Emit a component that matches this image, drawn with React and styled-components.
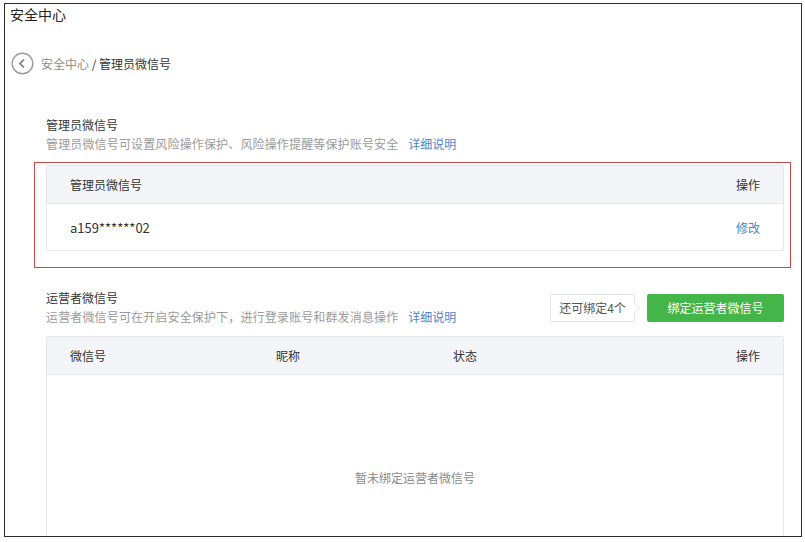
import React from "react";
import styled, { createGlobalStyle } from "styled-components";

const GlobalStyle = createGlobalStyle`
  body {
    margin: 0;
    background: #ffffff;
    font-family: "Noto Sans CJK SC", "Liberation Sans", sans-serif;
    color: #353535;
  }
`;

const Frame = styled.div`
  box-sizing: border-box;
  width: 798px;
  height: 534px;
  margin: 3px 0 0 4px;
  border: 1px solid #2b2b2b;
  overflow: hidden;
`;

const PageTitle = styled.div`
  padding: 0 0 0 5px;
  height: 20px;
  font-size: 14px;
  line-height: 20px;
  color: #222;
`;

const Breadcrumb = styled.div`
  display: flex;
  align-items: center;
  gap: 7px;
  height: 24px;
  margin-top: 27px;
  padding-left: 6px;
  font-size: 12px;
`;

const Crumb = styled.span`
  color: ${(p) => (p.$current ? "#333" : "#8d8d8d")};
`;

const Content = styled.div`
  padding: 0 17px 0 41px;
`;

const SectionHead = styled.div`
  display: flex;
  align-items: center;
  justify-content: space-between;
  margin-top: ${(p) => p.$top}px;
`;

const Heading = styled.div`
  font-size: 12px;
  line-height: 18px;
  color: #353535;
`;

const Desc = styled.div`
  margin-top: 1px;
  font-size: 12px;
  letter-spacing: 0.15px;
  line-height: 18px;
  color: #9a9a9a;
`;

const Link = styled.a`
  margin-left: 10px;
  color: #4d86c8;
  font-size: 12px;
  letter-spacing: 0;
  text-decoration: none;
`;

const Highlight = styled.div`
  margin: 9px -7px 0 -12px;
  padding: 2px 6px 16px 11px;
  border: 1px solid #c9494b;
`;

const Table = styled.div`
  border: 1px solid #e7e7eb;
  border-radius: 2px;
  margin-top: ${(p) => p.$top || 0}px;
`;

const Row = styled.div`
  display: grid;
  grid-template-columns: ${(p) => p.$cols};
  align-items: center;
  height: ${(p) => (p.$head ? 37 : 46)}px;
  padding: 0 23px;
  font-size: 12px;
  color: #333;
  background: ${(p) => (p.$head ? "#f4f5f9" : "#fff")};
  border-bottom: ${(p) => (p.$head ? "1px solid #e7e7eb" : "none")};
`;

const Cell = styled.div`
  text-align: ${(p) => (p.$right ? "right" : "left")};
`;

const Value = styled(Cell)`
  font-size: 13px;
`;

const Action = styled(Cell)`
  color: #4d86c8;
`;

const Empty = styled.div`
  display: flex;
  align-items: center;
  justify-content: center;
  height: 204px;
  font-size: 12px;
  color: #8a8a8a;
`;

const Actions = styled.div`
  display: flex;
  align-items: center;
  gap: 12px;
`;

const Bubble = styled.div`
  position: relative;
  box-sizing: border-box;
  height: 28px;
  padding: 0 8px;
  border: 1px solid #e4e4e4;
  background: #fff;
  font-size: 12px;
  line-height: 26px;
  color: #555;

  &::before,
  &::after {
    content: "";
    position: absolute;
    top: 50%;
    width: 0;
    height: 0;
    border-style: solid;
    transform: translateY(-50%);
  }
  &::before {
    right: -6px;
    border-width: 6px 0 6px 6px;
    border-color: transparent transparent transparent #e4e4e4;
  }
  &::after {
    right: -5px;
    border-width: 5px 0 5px 5px;
    border-color: transparent transparent transparent #fff;
  }
`;

const GreenButton = styled.button`
  height: 28px;
  width: 137px;
  border: none;
  border-radius: 2px;
  background: #44b549;
  color: #fff;
  font-family: inherit;
  font-size: 12px;
`;

const BackIcon = () => (
  <svg width="23" height="23" viewBox="0 0 23 23">
    <circle cx="11.5" cy="11.5" r="10.3" fill="none" stroke="#9c9c9c" strokeWidth="1.4" />
    <path d="M13 7.5 L9 11.5 L13 15.5" fill="none" stroke="#777" strokeWidth="1.6" />
  </svg>
);

export default function App() {
  return (
    <>
      <GlobalStyle />
      <Frame>
        <PageTitle>安全中心</PageTitle>
        <Breadcrumb>
          <BackIcon />
          <span>
            <Crumb>安全中心</Crumb>
            <Crumb $current> / 管理员微信号</Crumb>
          </span>
        </Breadcrumb>
        <Content>
          <SectionHead $top={41}>
            <div>
              <Heading>管理员微信号</Heading>
              <Desc>
                管理员微信号可设置风险操作保护、风险操作提醒等保护账号安全
                <Link href="#">详细说明</Link>
              </Desc>
            </div>
          </SectionHead>
          <Highlight>
            <Table>
              <Row $head $cols="1fr auto">
                <Cell>管理员微信号</Cell>
                <Cell $right>操作</Cell>
              </Row>
              <Row $cols="1fr auto">
                <Value>a159******02</Value>
                <Action $right>修改</Action>
              </Row>
            </Table>
          </Highlight>
          <SectionHead $top={21}>
            <div>
              <Heading>运营者微信号</Heading>
              <Desc>
                运营者微信号可在开启安全保护下，进行登录账号和群发消息操作
                <Link href="#">详细说明</Link>
              </Desc>
            </div>
            <Actions>
              <Bubble>还可绑定4个</Bubble>
              <GreenButton>绑定运营者微信号</GreenButton>
            </Actions>
          </SectionHead>
          <Table $top={10}>
            <Row $head $cols="206px 177px 1fr auto">
              <Cell>微信号</Cell>
              <Cell>昵称</Cell>
              <Cell>状态</Cell>
              <Cell $right>操作</Cell>
            </Row>
            <Empty>暂未绑定运营者微信号</Empty>
          </Table>
        </Content>
      </Frame>
    </>
  );
}
